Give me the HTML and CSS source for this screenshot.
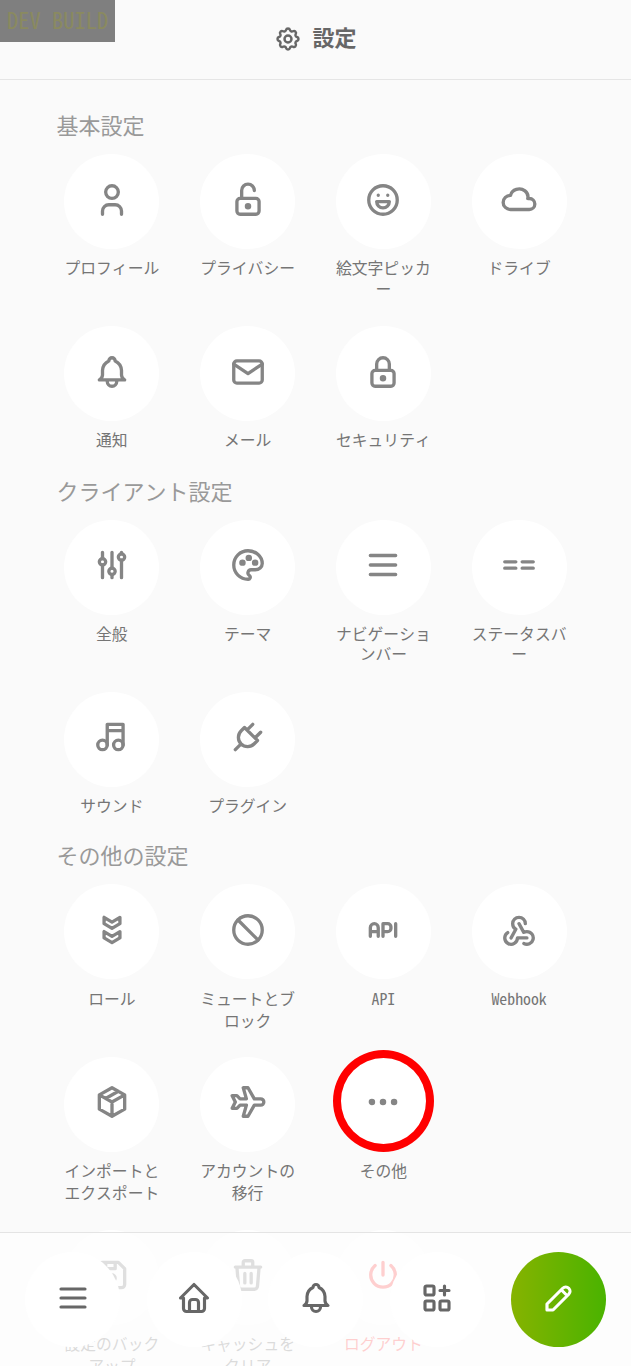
FILE: index.html
```html
<!DOCTYPE html>
<html lang="ja">
<head>
<meta charset="utf-8">
<title>設定</title>
<link rel="stylesheet" href="styles.css">
</head>
<body>
<div class="app">
  <div class="dev-badge">DEV BUILD</div>
  <header class="header">
    <svg class="header-icon" viewBox="0 0 24 24"><path d="M10.325 4.317c.426-1.756 2.924-1.756 3.35 0a1.724 1.724 0 0 0 2.573 1.066c1.543-.94 3.31.826 2.37 2.37a1.724 1.724 0 0 0 1.065 2.572c1.756.426 1.756 2.924 0 3.35a1.724 1.724 0 0 0-1.066 2.573c.94 1.543-.826 3.31-2.37 2.37a1.724 1.724 0 0 0-2.572 1.065c-.426 1.756-2.924 1.756-3.35 0a1.724 1.724 0 0 0-2.573-1.066c-1.543.94-3.31-.826-2.37-2.37a1.724 1.724 0 0 0-1.065-2.572c-1.756-.426-1.756-2.924 0-3.35a1.724 1.724 0 0 0 1.066-2.573c-.94-1.543.826-3.31 2.37-2.37c1 .608 2.296.07 2.572-1.065z"/><circle cx="12" cy="12" r="3"/></svg>
    <h1 class="title">設定</h1>
  </header>
  <main class="content">
    <section class="group">
      <h2 class="group-title">基本設定</h2>
      <div class="grid">
        <a class="item"><span class="disc"><svg viewBox="0 0 24 24"><circle cx="12" cy="7" r="4"/><path d="M6 21v-2a4 4 0 0 1 4-4h4a4 4 0 0 1 4 4v2"/></svg></span><span class="label">プロフィール</span></a>
        <a class="item"><span class="disc"><svg viewBox="0 0 24 24"><rect x="5" y="11" width="14" height="10" rx="2"/><circle cx="12" cy="16" r="1"/><path d="M8 11v-5a4 4 0 0 1 8 0"/></svg></span><span class="label">プライバシー</span></a>
        <a class="item"><span class="disc"><svg viewBox="0 0 24 24"><circle cx="12" cy="12" r="9"/><path d="M9 9h.01M15 9h.01M8 13a4 4 0 1 0 8 0h-8"/></svg></span><span class="label">絵文字ピッカ<br>ー</span></a>
        <a class="item"><span class="disc"><svg viewBox="0 0 24 24"><path d="M6.657 18c-2.572 0-4.657-2.007-4.657-4.483 0-2.475 2.085-4.482 4.657-4.482.393-1.762 1.794-3.2 3.675-3.773 1.88-.572 3.956-.193 5.444 1 1.488 1.19 2.162 3.007 1.77 4.769h.99c1.913 0 3.464 1.56 3.464 3.486 0 1.927-1.551 3.487-3.465 3.487h-11.878"/></svg></span><span class="label">ドライブ</span></a>
        <a class="item"><span class="disc"><svg viewBox="0 0 24 24"><path d="M10 5a2 2 0 0 1 4 0a7 7 0 0 1 4 6v3a4 4 0 0 0 2 3h-16a4 4 0 0 0 2-3v-3a7 7 0 0 1 4-6M9 17v1a3 3 0 0 0 6 0v-1"/></svg></span><span class="label">通知</span></a>
        <a class="item"><span class="disc"><svg viewBox="0 0 24 24"><rect x="3" y="5" width="18" height="14" rx="2"/><path d="M3 7l9 6l9-6"/></svg></span><span class="label">メール</span></a>
        <a class="item"><span class="disc"><svg viewBox="0 0 24 24"><rect x="5" y="11" width="14" height="10" rx="2"/><circle cx="12" cy="16" r="1"/><path d="M8 11v-4a4 4 0 0 1 8 0v4"/></svg></span><span class="label">セキュリティ</span></a>
      </div>
    </section>
    <section class="group">
      <h2 class="group-title">クライアント設定</h2>
      <div class="grid">
        <a class="item"><span class="disc"><svg viewBox="0 0 24 24"><circle cx="6" cy="10" r="2"/><circle cx="12" cy="16" r="2"/><circle cx="18" cy="7" r="2"/><path d="M6 4v4M6 12v8M12 4v10M12 18v2M18 4v1M18 9v11"/></svg></span><span class="label">全般</span></a>
        <a class="item"><span class="disc"><svg viewBox="0 0 24 24"><path d="M12 21a9 9 0 0 1 0-18c4.97 0 9 3.582 9 8c0 1.06-.474 2.078-1.318 2.828c-.844.75-1.989 1.172-3.182 1.172h-2.5a2 2 0 0 0-1 3.75a1.3 1.3 0 0 1-1 2.25"/><circle cx="8.5" cy="10.5" r="1"/><circle cx="12.5" cy="7.5" r="1"/><circle cx="16.5" cy="10.5" r="1"/></svg></span><span class="label">テーマ</span></a>
        <a class="item"><span class="disc"><svg viewBox="0 0 24 24"><path d="M4 6h16M4 12h16M4 18h16"/></svg></span><span class="label">ナビゲーショ<br>ンバー</span></a>
        <a class="item"><span class="disc"><svg viewBox="0 0 24 24"><path d="M3 10h7M14 10h7M3 14h7M14 14h7"/></svg></span><span class="label">ステータスバ<br>ー</span></a>
        <a class="item"><span class="disc"><svg viewBox="0 0 24 24"><circle cx="6" cy="17" r="3"/><circle cx="16" cy="17" r="3"/><path d="M9 17V4h10v13M9 8h10"/></svg></span><span class="label">サウンド</span></a>
        <a class="item"><span class="disc"><svg viewBox="0 0 24 24"><path d="M9.785 6l8.215 8.215l-2.054 2.054a5.81 5.81 0 1 1-8.215-8.215l2.054-2.054zM4 20l3.5-3.5M15 4l-3.5 3.5M20 9l-3.5 3.5"/></svg></span><span class="label">プラグイン</span></a>
      </div>
    </section>
    <section class="group group-last">
      <h2 class="group-title">その他の設定</h2>
      <div class="grid grid-long">
        <a class="item"><span class="disc"><svg viewBox="0 0 24 24"><path d="M17 17v-4l-5 3l-5-3v4l5 3zM17 8v-4l-5 3l-5-3v4l5 3z"/></svg></span><span class="label">ロール</span></a>
        <a class="item"><span class="disc"><svg viewBox="0 0 24 24"><circle cx="12" cy="12" r="9"/><path d="M5.7 5.7l12.6 12.6"/></svg></span><span class="label">ミュートとブ<br>ロック</span></a>
        <a class="item"><span class="disc"><svg viewBox="0 0 24 24"><path d="M4 13h5M12 16v-8h3a2 2 0 0 1 2 2v1a2 2 0 0 1-2 2h-3M20 8v8M9 16v-5.5a2.5 2.5 0 0 0-5 0v5.5"/></svg></span><span class="label">API</span></a>
        <a class="item"><span class="disc"><svg viewBox="0 0 24 24"><path d="M4.876 13.61a4 4 0 1 0 6.124 3.39h6M15.066 20.502a4 4 0 1 0 1.934-7.502c-.706 0-1.424.179-2 .5l-3-5.5M16 8a4 4 0 1 0-8 0c0 1.506.77 2.818 2 3.5l-3 5.5"/></svg></span><span class="label">Webhook</span></a>
        <a class="item"><span class="disc"><svg viewBox="0 0 24 24"><path d="M12 3l8 4.5v9l-8 4.5l-8-4.5v-9zM12 12l8-4.5M12 12v9M12 12l-8-4.5M16 5.25l-8 4.5"/></svg></span><span class="label">インポートと<br>エクスポート</span></a>
        <a class="item"><span class="disc"><svg viewBox="0 0 24 24"><path d="M16 10h4a2 2 0 0 1 0 4h-4l-4 7h-3l2-7h-4l-2 2h-3l2-4l-2-4h3l2 2h4l-2-7h3z"/></svg></span><span class="label">アカウントの<br>移行</span></a>
        <a class="item marked"><span class="disc"><svg viewBox="0 0 24 24"><circle cx="5" cy="12" r="1"/><circle cx="12" cy="12" r="1"/><circle cx="19" cy="12" r="1"/></svg></span><span class="label">その他</span></a>
        <a class="item row-start"><span class="disc"><svg viewBox="0 0 24 24"><path d="M6 4h10l4 4v10a2 2 0 0 1-2 2h-12a2 2 0 0 1-2-2v-12a2 2 0 0 1 2-2M14 4v4h-6v-4"/><circle cx="12" cy="14" r="2"/></svg></span><span class="label">設定のバック<br>アップ</span></a>
        <a class="item"><span class="disc"><svg viewBox="0 0 24 24"><path d="M4 7h16M10 11v6M14 11v6M5 7l1 12a2 2 0 0 0 2 2h8a2 2 0 0 0 2-2l1-12M9 7v-3a1 1 0 0 1 1-1h4a1 1 0 0 1 1 1v3"/></svg></span><span class="label">キャッシュを<br>クリア</span></a>
        <a class="item danger"><span class="disc"><svg viewBox="0 0 24 24"><path d="M7 6a7.75 7.75 0 1 0 10 0M12 4v8"/></svg></span><span class="label">ログアウト</span></a>
      </div>
    </section>
  </main>
  <nav class="nav">
    <button class="nav-btn"><svg viewBox="0 0 24 24"><path d="M4 6h16M4 12h16M4 18h16"/></svg></button>
    <button class="nav-btn"><svg viewBox="0 0 24 24"><path d="M5 12H3l9-9l9 9h-2M5 12v7a2 2 0 0 0 2 2h10a2 2 0 0 0 2-2v-7M9 21v-6a2 2 0 0 1 2-2h2a2 2 0 0 1 2 2v6"/></svg></button>
    <button class="nav-btn"><svg viewBox="0 0 24 24"><path d="M10 5a2 2 0 0 1 4 0a7 7 0 0 1 4 6v3a4 4 0 0 0 2 3h-16a4 4 0 0 0 2-3v-3a7 7 0 0 1 4-6M9 17v1a3 3 0 0 0 6 0v-1"/></svg></button>
    <button class="nav-btn"><svg viewBox="0 0 24 24"><rect x="4" y="4" width="6" height="6" rx="1"/><rect x="4" y="14" width="6" height="6" rx="1"/><rect x="14" y="14" width="6" height="6" rx="1"/><path d="M14 7h6M17 4v6"/></svg></button>
    <button class="nav-btn post"><svg viewBox="0 0 24 24"><path d="M4 20h4l10.5-10.5a1.5 1.5 0 0 0-4-4l-10.5 10.5v4M13.5 6.5l4 4"/></svg></button>
  </nav>
</div>
</body>
</html>
```
FILE: styles.css
```css
*,
*::after {
  box-sizing: border-box;
}

html, body {
  margin: 0;
  height: 100%;
  overflow: hidden;
}

body {
  background: #fafafa;
  color: #676767;
  font-family: "Noto Sans Mono CJK JP", "Noto Sans CJK JP", sans-serif;
}

svg {
  display: block;
  fill: none;
  stroke: currentColor;
  stroke-width: 2.1;
  stroke-linecap: round;
  stroke-linejoin: round;
}

.app {
  position: relative;
  height: 1366px;
  overflow: hidden;
}

.dev-badge {
  position: absolute;
  top: 0;
  left: 0;
  width: 115px;
  height: 42px;
  padding-left: 7px;
  background: #7f7f7f;
  color: #8a8a60;
  font-size: 22.5px;
  line-height: 38px;
  white-space: nowrap;
}

.header {
  display: flex;
  align-items: center;
  justify-content: center;
  gap: 10px;
  height: 80px;
  padding: 0 0 2px;
  border-bottom: 1px solid #e5e5e5;
}

.header-icon {
  width: 28px;
  height: 28px;
}

.title {
  margin: 0;
  padding-bottom: 5px;
  font-size: 22px;
  font-weight: 700;
  line-height: 32px;
}

.content {
  padding: 24.4px 44px 0;
}

.group-last {
  margin-top: -0.8px;
}

.group-title {
  height: 50px;
  margin: 0;
  padding-left: 12.5px;
  color: #999;
  font-size: 22px;
  font-weight: 400;
  line-height: 41px;
}

.grid {
  display: grid;
  grid-template-columns: repeat(4, 135.75px);
  grid-template-rows: 172px 143.4px;
}

.grid-long {
  grid-template-rows: 172.3px 173px 172px;
}

.item {
  position: relative;
  display: flex;
  flex-direction: column;
  align-items: center;
  gap: 9px;
  color: #858585;
}

.row-start {
  grid-column: 1;
}

.disc {
  display: flex;
  align-items: center;
  justify-content: center;
  width: 95px;
  height: 95px;
  padding-bottom: 4px;
  border-radius: 50%;
  background: #fff;
}

.disc svg {
  width: 38px;
  height: 38px;
}

.label {
  color: #757575;
  font-size: 15.8px;
  line-height: 20.5px;
  text-align: center;
  white-space: nowrap;
}

.grid-long .item {
  gap: 8.3px;
}

.grid-long .label {
  line-height: 22px;
}

/* highlight ring around the selected entry */
.marked::after {
  content: "";
  position: absolute;
  top: -7px;
  left: 17px;
  width: 101px;
  height: 102px;
  border: 8px solid #f00;
  border-radius: 50%;
}

.danger,
.danger .label {
  color: #ff4545;
}

.nav {
  position: absolute;
  right: 0;
  bottom: 0;
  left: 0;
  display: flex;
  gap: 26.5px;
  height: 134px;
  padding: 19px 25px 0;
  border-top: 1px solid #e4e4e4;
  background: rgba(254, 254, 254, 0.75);
}

.nav-btn {
  display: flex;
  flex: none;
  align-items: center;
  justify-content: center;
  width: 95px;
  height: 95px;
  padding: 0 0 3px;
  border: 0;
  border-radius: 50%;
  background: #fff;
  color: #676767;
}

.nav-btn svg {
  width: 36px;
  height: 36px;
}

.post {
  background: linear-gradient(90deg, #86b300, #4ab300);
  color: #fff;
}
```
